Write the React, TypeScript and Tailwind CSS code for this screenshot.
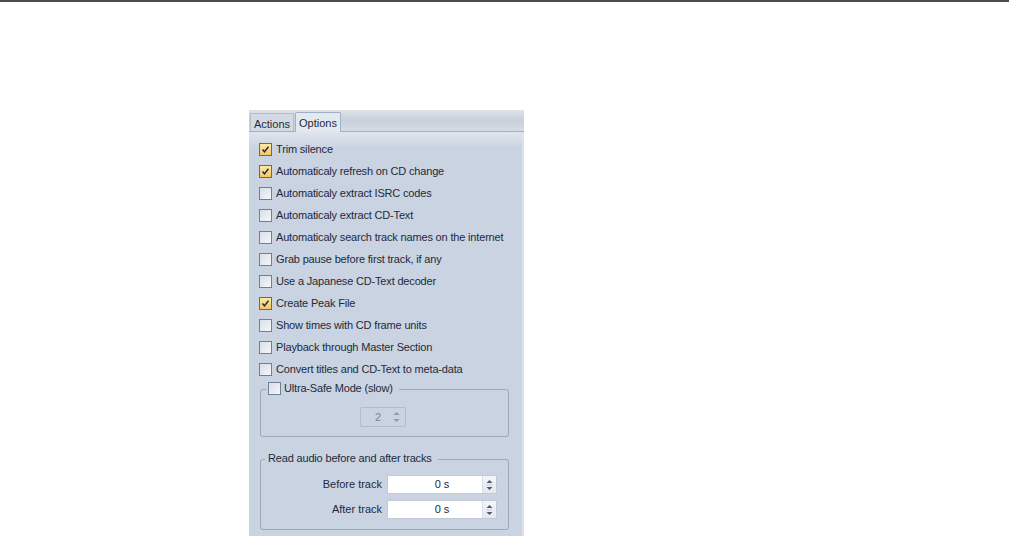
import React from "react";

const font = { fontFamily: '"Liberation Sans", Arial, sans-serif' };

function Check({ checked }: { checked?: boolean }) {
  return (
    <span
      className={
        "relative inline-block w-[13px] h-[13px] shrink-0 border " +
        (checked
          ? "border-[#5a6b86] bg-gradient-to-b from-[#fde9a8] to-[#f5c55e]"
          : "border-[#6e7f99] bg-gradient-to-br from-[#d9dfe8] to-[#f4f6f9]")
      }
    >
      {checked && (
        <svg viewBox="0 0 11 11" className="absolute left-0 top-0 w-[11px] h-[11px]">
          <path d="M2.5 5.5 L4.5 7.8 L8.5 2.8" fill="none" stroke="#1d2a44" strokeWidth="1.4" />
        </svg>
      )}
    </span>
  );
}

function Row({ label, checked }: { label: string; checked?: boolean }) {
  return (
    <div className="flex items-center h-[22px] pl-[10px] gap-[4px]">
      <Check checked={checked} />
      <span className="text-[11px] text-[#1e2a3c] leading-none whitespace-nowrap tracking-[-0.17px]">{label}</span>
    </div>
  );
}

function Arrows({ color }: { color: string }) {
  return (
    <svg viewBox="0 0 9 14" className="w-[9px] h-[14px]">
      <path d="M1.5 5 L4.5 2 L7.5 5 Z" fill={color} />
      <path d="M1.5 9 L4.5 12 L7.5 9 Z" fill={color} />
      <rect x="1" y="6.5" width="7" height="1" fill="#c8d1de" />
    </svg>
  );
}

export default function App() {
  const items: [string, boolean][] = [
    ["Trim silence", true],
    ["Automaticaly refresh on CD change", true],
    ["Automaticaly extract ISRC codes", false],
    ["Automaticaly extract CD-Text", false],
    ["Automaticaly search track names on the internet", false],
    ["Grab pause before first track, if any", false],
    ["Use a Japanese CD-Text decoder", false],
    ["Create Peak File", true],
    ["Show times with CD frame units", false],
    ["Playback through Master Section", false],
    ["Convert titles and CD-Text to meta-data", false],
  ];
  return (
    <div className="w-[1009px] h-[536px] bg-white relative overflow-hidden" style={font}>
      <div className="h-[2px] bg-[#4b4b4b]" />
      <div className="absolute left-[249px] top-[110px] w-[275px] h-[426px] flex flex-col bg-[#c9d3e1]">
        {/* tab strip */}
        <div className="h-[21px] flex items-end bg-gradient-to-b from-[#dfe3ea] via-[#c9d0db] to-[#d6dce5] relative">
          <div className="h-[18px] w-[44px] pt-[3px] flex items-center justify-center text-[11px] text-[#1e2a3c] border border-b-0 border-[#b3bdcb] bg-[#d4dae4] ml-[1px]">
            Actions
          </div>
          <div className="h-[20px] w-[46px] pt-[1px] flex items-center justify-center text-[11px] text-[#1e2a3c] border border-b-0 border-[#9fb0c8] bg-[#e4e9f0] ml-[1px] rounded-t-[2px] relative z-10 -mb-[1px]">
            Options
          </div>
        </div>
        <div className="h-[1px] bg-[#9fb0c8]" />
        <div className="flex-1 flex flex-col bg-gradient-to-b from-[#dfe5ee] from-0% via-[#c9d3e1] via-[4%] to-[#c9d3e1] border-r-[2px] border-[#dce3ec] pt-[6px]">
          {items.map(([l, c]) => (
            <Row key={l} label={l} checked={c} />
          ))}
          {/* Ultra safe group */}
          <div className="relative ml-[11px] mr-[13px] mt-[9px] h-[48px] border border-[#9ca8b8] rounded-[3px]">
            <div className="absolute -top-[8px] left-[5px] flex items-center gap-[3px] bg-[#c9d3e1] pl-[2px] pr-[6px]">
              <Check />
              <span className="text-[11px] text-[#1e2a3c] leading-none whitespace-nowrap tracking-[-0.17px]">Ultra-Safe Mode (slow)</span>
            </div>
            <div className="flex justify-center pt-[17px] pr-[4px]">
              <div className="w-[46px] h-[20px] border border-[#b2bccb] rounded-[2px] flex items-center">
                <span className="flex-1 text-center text-[11px] text-[#7a8494] pl-[4px]">2</span>
                <span className="pr-[4px] flex"><Arrows color="#8f9aaa" /></span>
              </div>
            </div>
          </div>
          {/* Read audio group */}
          <div className="relative ml-[11px] mr-[13px] mt-[22px] h-[71px] border border-[#9ca8b8] rounded-[3px]">
            <div className="absolute -top-[7px] left-[4px] bg-[#c9d3e1] pl-[3px] pr-[6px] text-[11px] leading-none text-[#1e2a3c] whitespace-nowrap tracking-[-0.17px]">
              Read audio before and after tracks
            </div>
            <div className="flex flex-col gap-[6px] pt-[15px]">
              {["Before track", "After track"].map((l) => (
                <div key={l} className="flex items-center justify-end pr-[11px] gap-[5px]">
                  <span className="text-[11px] text-[#1e2a3c]">{l}</span>
                  <div className="w-[110px] h-[19px] bg-white border border-[#c2cad6] flex items-center">
                    <span className="flex-1 text-center text-[11px] text-[#1e2a3c] pl-[14px]">0 s</span>
                    <span className="w-[14px] h-full flex items-center justify-center bg-gradient-to-b from-[#f4f6f9] to-[#e3e8ef] border-l border-[#d8dee7]">
                      <Arrows color="#4a5870" />
                    </span>
                  </div>
                </div>
              ))}
            </div>
          </div>
        </div>
      </div>
    </div>
  );
}
